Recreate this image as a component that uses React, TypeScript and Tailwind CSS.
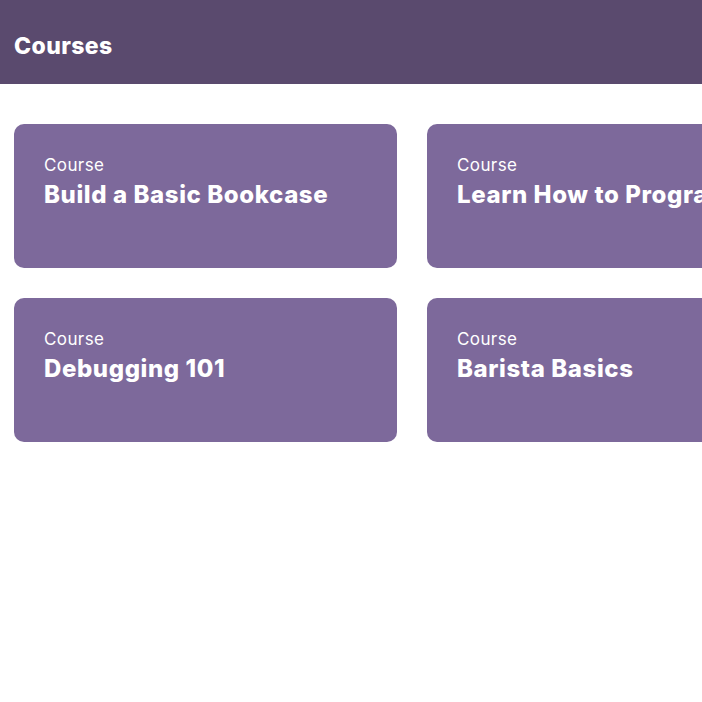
import React from 'react';

const courses = [
  'Build a Basic Bookcase',
  'Learn How to Program',
  'Debugging 101',
  'Barista Basics',
];

const App: React.FC = () => {
  return (
    <div className="min-h-screen w-full overflow-hidden bg-white font-['Inter',sans-serif]">
      <header className="h-[84px] bg-[#5a4a6e] flex items-center px-[14px] pt-[8px]">
        <h1 className="text-[23px] font-extrabold text-white tracking-[0.4px]">Courses</h1>
      </header>

      <div className="grid grid-cols-[383px_383px] gap-[30px] px-[14px] pt-[40px]">
        {courses.map((title) => (
          <div
            key={title}
            className="h-[144px] rounded-[10px] bg-[#7d699b] px-[30px] pt-[30px] text-white whitespace-nowrap"
          >
            <p className="text-[17px] leading-[22px] tracking-[0.4px]">Course</p>
            <h2 className="mt-[4px] text-[24px] font-extrabold leading-[30px] tracking-[0.6px]">{title}</h2>
          </div>
        ))}
      </div>
    </div>
  );
};

export default App;
